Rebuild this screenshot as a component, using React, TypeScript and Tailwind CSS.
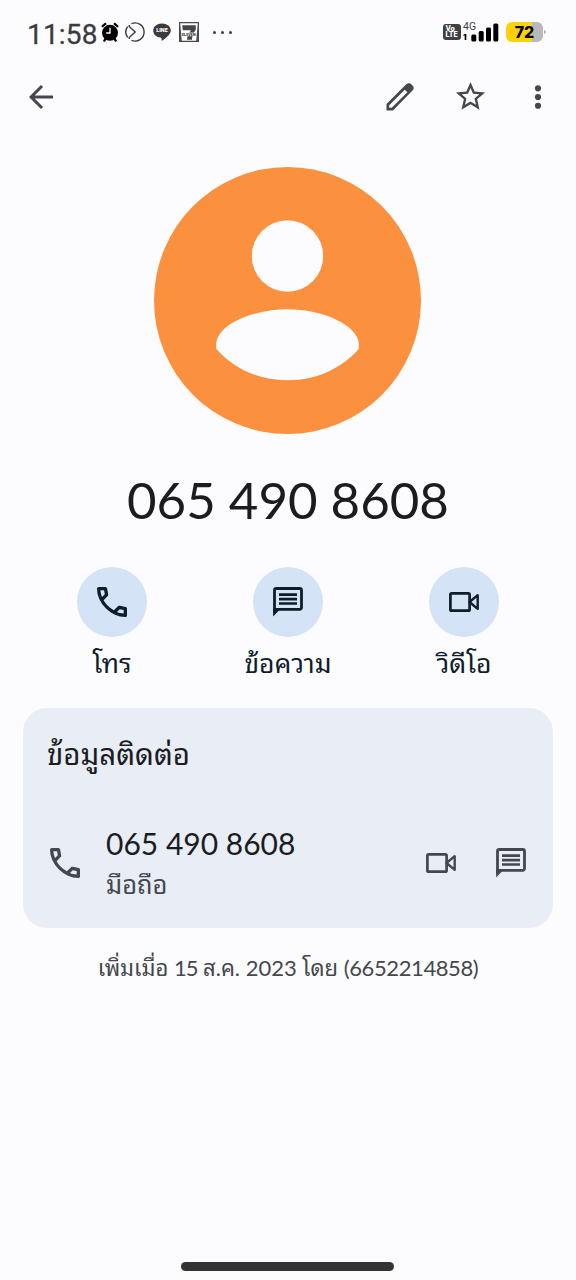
import type { ReactNode } from "react";

const THAI = "font-['Lato','Noto_Sans_Thai_Looped','Loma','Noto_Sans',sans-serif]";

function PhoneIcon({ className = "" }: { className?: string }) {
  return (
    <svg viewBox="0 0 24 24" className={`size-10 ${className}`} fill="currentColor">
      <path d="M19.95 21q-3.125 0-6.175-1.362t-5.55-3.863-3.862-5.55T3 4.05q0-.45.3-.75t.75-.3H8.1q.35 0 .625.238t.325.562l.65 3.500q.05.4-.025.675T9.400 8.450L6.975 10.900q.5.925 1.187 1.787t1.513 1.663q.775.775 1.625 1.438T13.100 17l2.350-2.350q.225-.225.588-.337t.712-.063l3.450.7q.35.1.575.363T21 15.900v4.050q0 .45-.3.75t-.75.3M6.025 9l1.650-1.650L7.250 5H5.025q.125 1.025.35 2.025T6.025 9m8.950 8.950q.975.425 1.988.675T19 18.950v-2.200l-2.350-.475z" />
    </svg>
  );
}

function MessageIcon({ className = "" }: { className?: string }) {
  return (
    <svg viewBox="0 0 40 40" className={`size-10 ${className}`} fill="none" stroke="currentColor">
      <path d="M6.500 31V8.200a1.700 1.700 0 0 1 1.700-1.700h23.600a1.700 1.700 0 0 1 1.700 1.700v17.400a1.700 1.700 0 0 1-1.700 1.700H8.500" strokeWidth="2.800" />
      <path d="M5.100 34.600V26h8.300z" fill="currentColor" stroke="none" />
      <path d="M11 12.600h18M11 17.100h18M11 21.500h18" strokeWidth="2.600" />
    </svg>
  );
}

function VideoIcon({ className = "" }: { className?: string }) {
  return (
    <svg viewBox="0 0 40 40" className={`size-10 ${className}`} fill="none" stroke="currentColor" strokeWidth="2.700">
      <rect x="6.400" y="11.400" width="19.200" height="17.300" rx="1.300" />
      <path d="M25.500 20l8.200-6.800v13.600z" strokeWidth="2.400" strokeLinejoin="round" />
    </svg>
  );
}

function Action({ label, children }: { label: string; children: ReactNode }) {
  return (
    <div className="flex w-44 flex-col items-center">
      <div className="flex size-[70px] items-center justify-center rounded-full bg-[#d5e3f6] text-[#0f1d2a]">
        {children}
      </div>
      <div className={`mt-2.5 h-8 text-[26.5px] leading-8 whitespace-nowrap text-[#0f1d2a] ${THAI}`}>{label}</div>
    </div>
  );
}

function StatusBar() {
  return (
    <div className="flex h-16 items-center justify-between pr-[33px] pl-[27px] text-[#3b3b3d]">
      <div className="flex items-center">
        <span className="w-[74px] pt-[5px] font-['Roboto',sans-serif] text-[28px] leading-8 tracking-[0.2px] whitespace-nowrap [-webkit-text-stroke:0.3px]">11:58</span>
        <svg viewBox="0 0 18 20" className="h-5 w-[18px]" fill="#000">
          <circle cx="9" cy="10.800" r="8" />
          <path d="M1.600 4.300 4.300 1.900M13.700 1.900l2.700 2.400M4.500 17 3.300 18.700M13.500 17l1.200 1.700" stroke="#000" strokeWidth="2.200" strokeLinecap="round" />
          <path d="M9 5.800v5.200H5.200" stroke="#fff" strokeWidth="1.300" fill="none" />
        </svg>
        <svg viewBox="0 0 20 20" className="ml-1.5 size-5" fill="none" stroke="currentColor" strokeWidth="1.400">
          <path d="M6.500 1.600A9.100 9.100 0 1 1 6.500 18.400M2.600 4.700A9.100 9.100 0 0 0 2.600 15.300" />
          <path d="M4.300 3l-.1 1.500L10.200 10l-6 5.500.1 1.500" />
        </svg>
        <span className="relative ml-2 flex h-[18px] w-[18px] justify-center">
          <svg viewBox="0 0 18 18" className="absolute inset-0 size-[18px]" fill="currentColor">
            <path d="M9 .4c4.900 0 8.800 3.100 8.800 7.100 0 4.300-5.600 8-8.500 10.100-.7.400-.8-.1-.7-1.200.1-1.200-.3-1.600-1.300-1.800C3 14 .2 11 .2 7.500.2 3.500 4.100.4 9 .4z" />
          </svg>
          <span className="relative pt-1 font-['Roboto',sans-serif] text-[5.5px] leading-[7px] font-black text-white">LINE</span>
        </span>
        <span className="relative ml-2 block h-5 w-5">
          <svg viewBox="0 0 20 20" className="absolute inset-0 size-5">
            <path d="M0 0h20v20H0z" fill="#4a4a4c" />
            <path d="M1.200 1.200h17.600L17.200 18.800H2.800z" fill="#fff" />
            <path d="M3.200 3.200h13.600v4.600Q13.300 12 13 17.800H8Q8.200 12 12.200 8.200H3.700z" fill="#454547" />
            <path d="M3.300 10.600h13.400v3.600H3.300z" fill="#fff" />
          </svg>
          <span className="absolute top-[10.5px] left-[3px] font-['Roboto',sans-serif] text-[3.8px] leading-[4px] font-black">ELEVEN</span>
        </span>
        <span className="ml-[14px] flex gap-[5px]">
          <i className="size-[3px] rounded-full bg-current" />
          <i className="size-[3px] rounded-full bg-current" />
          <i className="size-[3px] rounded-full bg-current" />
        </span>
      </div>
      <div className="flex items-center">
        <div className="flex h-4 w-[18px] flex-col items-center justify-center rounded-[3px] bg-[#404043] font-['Inter',sans-serif] text-[7px] leading-[6.5px] font-extrabold text-white">
          <span className="w-[13px]">Vo</span>
          <span className="w-[13px]">LTE</span>
        </div>
        <div className="relative ml-0.5 h-5 w-9 text-black">
          <span className="absolute top-0 left-0 font-['Roboto',sans-serif] text-[10.5px] leading-[10px] text-[#404043]">4G</span>
          <span className="absolute top-[11px] left-0 font-['Inter',sans-serif] text-[8px] leading-[9px] font-black">1</span>
          <svg viewBox="0 0 36 20" className="absolute inset-0 h-5 w-9">
            <rect x="8.300" y="12.500" width="5" height="7" rx="1.500" />
            <rect x="15.700" y="9" width="5" height="10.500" rx="1.500" />
            <rect x="23" y="5.500" width="5" height="14" rx="1.500" />
            <rect x="30.300" y="1.500" width="5" height="18" rx="1.500" />
          </svg>
        </div>
        <div className="relative ml-[7px] flex h-5 w-[37px] items-center justify-center rounded-[6px] bg-linear-to-r from-[#fdd20a] from-70% to-[#b9b9bb] to-70%">
          <span className="font-['Inter',sans-serif] text-[16px] leading-5 font-extrabold text-black">72</span>
          <i className="absolute top-2 -right-[2.5px] h-1 w-0.5 rounded-r bg-[#b9b9bb]" />
        </div>
      </div>
    </div>
  );
}

export default function App() {
  return (
    <div className="flex h-[1280px] w-[576px] flex-col overflow-hidden bg-[#fcfcff] font-['Lato',sans-serif]">
      <StatusBar />
      <div className="flex h-16 items-center pt-px pr-5 pl-[23px] text-[#44474b]">
        <svg viewBox="0 0 24 24" className="size-9" fill="none" stroke="currentColor" strokeWidth="2">
          <path d="M20 12H5.200M12.700 4.700 5.400 12l7.300 7.300" />
        </svg>
        <svg viewBox="0 0 24 24" className="ml-auto size-9" fill="currentColor">
          <path fillRule="evenodd" d="M3 21v-4.400L16.300 3.400Q17.200 2.700 18.300 2.900Q19 3 19.600 3.600L20.500 4.500Q21.300 5.300 21.100 6.300Q21 7 20.500 7.500L7.300 21zM4.800 19.200h1.700L16.900 8.800 15.200 7.100 4.800 17.500z" />
        </svg>
        <svg viewBox="0 0 24 24" className="ml-[35px] size-[35px]" fill="currentColor">
          <path d="M22 9.240l-7.190-.62L12 2 9.190 8.630 2 9.240l5.460 4.730L5.820 21 12 17.270 18.180 21l-1.630-7.030L22 9.240zM12 15.400l-3.760 2.270 1-4.280-3.320-2.880 4.380-.38L12 6.100l1.710 4.040 4.380.38-3.320 2.880 1 4.280L12 15.400z" />
        </svg>
        <svg viewBox="0 0 24 24" className="ml-8 size-9" fill="currentColor">
          <circle cx="12" cy="6.200" r="2.050" />
          <circle cx="12" cy="12" r="2.050" />
          <circle cx="12" cy="17.800" r="2.050" />
        </svg>
      </div>
      <svg viewBox="0 0 267 267" className="mt-[38.5px] ml-[154px] size-[267px] shrink-0">
        <circle cx="133.500" cy="133.500" r="133.500" fill="#fb913f" />
        <circle cx="133.500" cy="89" r="35.700" fill="#fcfcff" />
        <path d="M133.500 142.200c35 0 71.300 16 71.300 35.300v4.200c-16 18.500-41 31.500-71.300 31.500s-55.300-13-71.300-31.500v-4.200c0-19.300 36.300-35.300 71.300-35.300z" fill="#fcfcff" />
      </svg>
      <h1 className="mt-[36px] h-[60px] text-center text-[51px] leading-[60px] text-[#1b1c1f]">065 490 8608</h1>
      <div className="mt-[37px] flex px-6">
        <Action label="โทร"><PhoneIcon /></Action>
        <Action label="ข้อความ"><MessageIcon /></Action>
        <Action label="วิดีโอ"><VideoIcon /></Action>
      </div>
      <section className="mx-[23px] mt-[29px] flex h-[220px] flex-col rounded-[24px] bg-[#e9eef6] px-6">
        <h2 className={`mt-[26px] h-10 text-[29.5px] leading-10 text-[#1b1c1f] ${THAI}`}>ข้อมูลติดต่อ</h2>
        <div className="mt-[52px] flex items-start text-[#44474f]">
          <PhoneIcon className="mt-[17px] -ml-[2px]" />
          <div className="ml-[21px] flex-1">
            <div className="-mt-px h-9 text-[30px] leading-9 text-[#1b1c1f]">065 490 8608</div>
            <div className={`mt-[5px] h-9 text-[25.5px] leading-9 ${THAI}`}>มือถือ</div>
          </div>
          <VideoIcon className="mt-[17px]" />
          <MessageIcon className="mt-[17px] ml-[30px] -mr-[2px]" />
        </div>
      </section>
      <p className={`mt-[24px] h-8 text-center text-[22px] leading-8 whitespace-nowrap text-[#44474b] ${THAI}`}>
        เพิ่มเมื่อ <span className="tracking-[-1px]">15</span> ส.ค. 2023 โดย{" "}
        <span className="tracking-[-0.4px]">(6652214858)</span>
      </p>
      <div className="mt-auto mb-[9px] ml-[181px] h-[9px] w-[213px] rounded-full bg-[#333]" />
    </div>
  );
}
